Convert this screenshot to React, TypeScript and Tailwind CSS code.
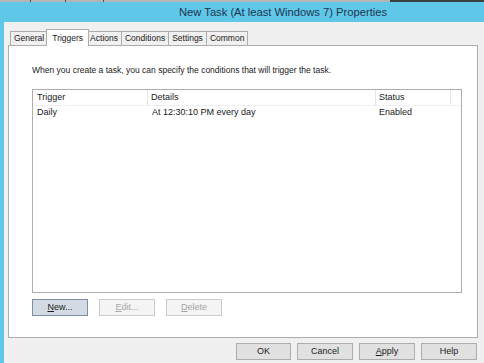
import React from "react";

const font = { fontFamily: '"Liberation Sans", Arial, sans-serif' };

const tabs = ["General", "Triggers", "Actions", "Conditions", "Settings", "Common"];

function Btn({ label, u, w, variant }: { label: string; u?: number; w: string; variant?: "default" | "disabled" | "focus" }) {
  const cls =
    variant === "disabled"
      ? "bg-[#f4f4f4] border-[#cccccc] text-[#a6a6a6]"
      : variant === "focus"
      ? "bg-[#d3dae3] border-[#7d8fa6] text-[#1a1a1a]"
      : "bg-[#e1e1e1] border-[#adadad] text-[#1a1a1a]";
  return (
    <div className={`${w} h-[17px] border flex items-center justify-center text-[9px] ${cls}`}>
      {u === undefined ? (
        label
      ) : (
        <span>
          {label.slice(0, u)}
          <span className="underline">{label[u]}</span>
          {label.slice(u + 1)}
        </span>
      )}
    </div>
  );
}

export default function App() {
  return (
    <div className="w-[484px] h-[363px] overflow-hidden flex flex-col bg-[#f0f0f0]" style={font}>
      {/* remnants of the window behind */}
      <div className="h-[2px] flex">
        <div className="w-[30px] bg-[#b5b5b5]" />
        <div className="w-px bg-[#555]" />
        <div className="w-[34px] bg-[#b5b5b5]" />
        <div className="w-px bg-[#555]" />
        <div className="w-[37px] bg-[#b5b5b5]" />
        <div className="w-px bg-[#555]" />
        <div className="w-[286px] bg-[#b5b5b5]" />
        <div className="flex-1 bg-[#3a3f44]" />
      </div>

      {/* title bar */}
      <div className="h-[20px] bg-[#5fc7e8] flex items-center pl-[179px]">
        <span className="text-[11.2px] text-[#1f3550] whitespace-nowrap">New Task (At least Windows 7) Properties</span>
      </div>

      <div className="flex-1 flex">
        <div className="w-[4px] bg-[#5fc7e8]" />
        <div className="flex-1 flex flex-col pl-[4px] pr-[6px]">
          {/* tabs */}
          <div className="h-[23px] flex items-end pl-[2px] pt-[7px]">
            {tabs.map((t) =>
              t === "Triggers" ? (
                <div
                  key={t}
                  className="h-[17px] -mb-px -mx-[2px] z-10 px-[5px] bg-white border border-b-0 border-[#adadad] flex items-start pt-[2px] text-[8.5px] text-[#1a1a1a]"
                >
                  {t}
                </div>
              ) : (
                <div
                  key={t}
                  className="h-[14px] px-[3px] bg-[#f0f0f0] border border-b-0 border-[#adadad] -ml-px first:ml-0 flex items-center text-[8.5px] text-[#1a1a1a]"
                >
                  {t}
                </div>
              )
            )}
          </div>

          {/* tab page */}
          <div className="h-[293px] bg-white border border-[#adadad] flex flex-col pl-[23px] pt-[18px]">
            <div className="text-[8.5px] text-[#1a1a1a] leading-[12px] whitespace-nowrap">
              When you create a task, you can specify the conditions that will trigger the task.
            </div>

            <div className="mt-[13px] w-[430px] h-[204px] border border-[#adadad] flex flex-col">
              <div className="h-[16px] flex text-[9px] text-[#1a1a1a] border-b border-[#f0f0f0]">
                <div className="w-[115px] pl-[4px] border-r border-[#e5e5e5] flex items-center">Trigger</div>
                <div className="w-[228px] pl-[3px] border-r border-[#e5e5e5] flex items-center">Details</div>
                <div className="w-[75px] pl-[3px] border-r border-[#e5e5e5] flex items-center">Status</div>
                <div className="flex-1" />
              </div>
              <div className="h-[14px] flex text-[9px] text-[#1a1a1a]">
                <div className="w-[115px] pl-[4px] flex items-center">Daily</div>
                <div className="w-[228px] pl-[4px] flex items-center">At 12:30:10 PM every day</div>
                <div className="w-[75px] pl-[3px] flex items-center">Enabled</div>
              </div>
            </div>

            <div className="mt-[6px] flex gap-[11px]">
              <Btn label="New..." u={0} w="w-[56px]" variant="focus" />
              <Btn label="Edit..." u={0} w="w-[56px]" variant="disabled" />
              <Btn label="Delete" u={0} w="w-[56px]" variant="disabled" />
            </div>
          </div>

          {/* dialog buttons */}
          <div className="flex justify-end gap-[6px] pt-[5px] pr-px">
            <Btn label="OK" w="w-[55px]" />
            <Btn label="Cancel" w="w-[56px]" />
            <Btn label="Apply" u={0} w="w-[56px]" />
            <Btn label="Help" w="w-[56px]" />
          </div>
        </div>
      </div>
    </div>
  );
}
